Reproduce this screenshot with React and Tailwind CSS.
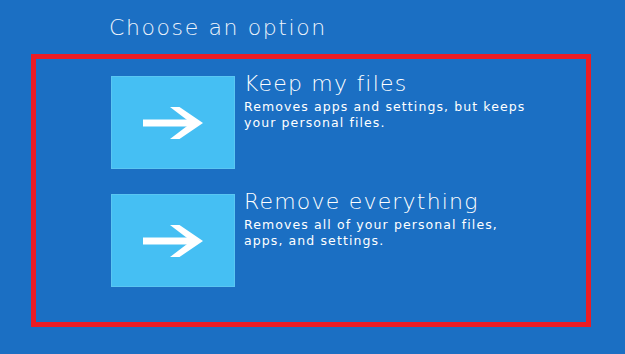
import React from 'react';

const options = [
  { title: 'Keep my files', lines: ['Removes apps and settings, but keeps', 'your personal files.'] },
  { title: 'Remove everything', lines: ['Removes all of your personal files,', 'apps, and settings.'] },
];

const ArrowIcon = () => (
  <svg width="62" height="34" viewBox="0 0 62 34" fill="white">
    <rect x="1" y="13.5" width="50" height="7" />
    <path d="M28 1H37.5L61 17L37.5 33H28L49 17Z" />
  </svg>
);

const App = () => {
  return (
    <div
      className="w-[625px] h-[354px] overflow-hidden bg-[#1b6fc3] text-white"
      style={{ fontFamily: '"DejaVu Sans", "Open Sans", sans-serif' }}
    >
      <h1 className="pl-[109px] pt-[13px] h-[54px] text-[22px] leading-[30px] font-extralight tracking-[1.6px] text-[#eef4fb]">
        Choose an option
      </h1>

      <div className="ml-[31px] w-[560px] h-[273px] border-[5px] border-[#ec1c24] pt-[17px] pl-[75px] flex flex-col gap-[25px]">
        {options.map((option) => (
          <div key={option.title} className="flex gap-[9px]">
            <div className="w-[124px] h-[93px] bg-[#45bff3] border border-[#5ac6f2] flex items-center justify-center">
              <ArrowIcon />
            </div>
            <div className="-mt-[7px]">
              <h2 className="text-[22px] leading-[30px] font-extralight tracking-[1.2px]">{option.title}</h2>
              <p className="text-[12.5px] leading-[16px] tracking-[1.1px] text-white">
                {option.lines[0]}
                <br />
                {option.lines[1]}
              </p>
            </div>
          </div>
        ))}
      </div>
    </div>
  );
};

export default App;
